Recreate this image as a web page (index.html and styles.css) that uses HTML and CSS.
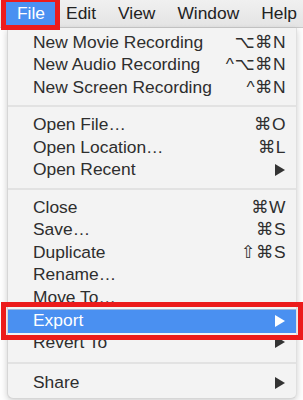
FILE: index.html
```html
<!DOCTYPE html>
<html>
<head>
<meta charset="utf-8">
<link rel="stylesheet" href="styles.css">
</head>
<body>
<div class="screen">
  <div class="menubar">
    <div class="mb-item mb-active">File</div>
    <div class="mb-item">Edit</div>
    <div class="mb-item">View</div>
    <div class="mb-item">Window</div>
    <div class="mb-item">Help</div>
  </div>
  <div class="dropdown">
    <div class="row"><span class="label">New Movie Recording</span><span class="key">⌥⌘N</span></div>
    <div class="row"><span class="label">New Audio Recording</span><span class="key">^⌥⌘N</span></div>
    <div class="row"><span class="label">New Screen Recording</span><span class="key">^⌘N</span></div>
    <div class="sep"></div>
    <div class="row"><span class="label">Open File…</span><span class="key">⌘O</span></div>
    <div class="row"><span class="label">Open Location…</span><span class="key">⌘L</span></div>
    <div class="row"><span class="label">Open Recent</span><span class="arrow"></span></div>
    <div class="sep"></div>
    <div class="row"><span class="label">Close</span><span class="key">⌘W</span></div>
    <div class="row"><span class="label">Save…</span><span class="key">⌘S</span></div>
    <div class="row"><span class="label">Duplicate</span><span class="key">⇧⌘S</span></div>
    <div class="row"><span class="label">Rename…</span></div>
    <div class="row"><span class="label">Move To…</span></div>
    <div class="row row-active"><span class="label">Export</span><span class="arrow"></span></div>
    <div class="row"><span class="label">Revert To</span><span class="arrow"></span></div>
    <div class="sep sep-last"></div>
    <div class="row"><span class="label">Share</span><span class="arrow"></span></div>
  </div>
</div>
</body>
</html>
```
FILE: styles.css
```css
* { box-sizing: border-box; }
html, body {
  margin: 0;
  padding: 0;
  background: #ffffff;
}
.screen {
  width: 303px;
  height: 400px;
  overflow: hidden;
  font-family: "Liberation Sans", "DejaVu Sans", sans-serif;
  font-size: 17.4px;
  color: #2e2e2e;
  background: #fdfdfd;
}
.menubar {
  height: 28px;
  display: flex;
  align-items: flex-start;
  padding-left: 6px;
  padding-top: 2px;
  white-space: nowrap;
  background: linear-gradient(#f0f0f0, #e4e4e4);
  border-bottom: 1px solid #c9c9c9;
  color: #222;
}
.mb-item {
  height: 23px;
  line-height: 23px;
  padding: 0 11px;
  flex: none;
}
.mb-active {
  background: #4a90f1;
  color: #ffffff;
  padding: 0 10px 0 11px;
  outline: 5px solid #ec1b1b;
  outline-offset: 0;
  position: relative;
  z-index: 2;
}
.dropdown {
  margin-left: 7px;
  width: 290px;
  padding: 3px 0 4px;
  background: #f3f3f3;
  border-left: 1px solid #d6d6d6;
  border-right: 1px solid #e0e0e0;
  border-bottom: 1px solid #d6d6d6;
  border-radius: 0 0 6px 6px;
  box-shadow: 0 2px 6px rgba(0,0,0,0.18);
}
.row {
  height: 22.5px;
  display: flex;
  align-items: center;
  justify-content: space-between;
  padding: 0 10px 0 25px;
  white-space: nowrap;
}
.key {
  letter-spacing: 0.5px;
  color: #2e2e2e;
}
.arrow {
  width: 0;
  height: 0;
  border-top: 6px solid transparent;
  border-bottom: 6px solid transparent;
  border-left: 10px solid #333;
  margin-right: 1px;
}
.row-active {
  height: 24px;
  margin: 0 0 -1.5px;
  background: #4a90f1;
  color: #ffffff;
  outline: 5px solid #ec1b1b;
  outline-offset: 2px;
  position: relative;
  z-index: 2;
  box-shadow: inset 0 1px 0 #9db9dd;
}
.row-active .arrow {
  border-left-color: #ffffff;
}
.sep {
  height: 15px;
  display: flex;
  align-items: center;
}
.sep-last {
  height: 18px;
}
.sep::after {
  content: "";
  display: block;
  width: 100%;
  height: 2px;
  background: #e2e2e2;
}
```
